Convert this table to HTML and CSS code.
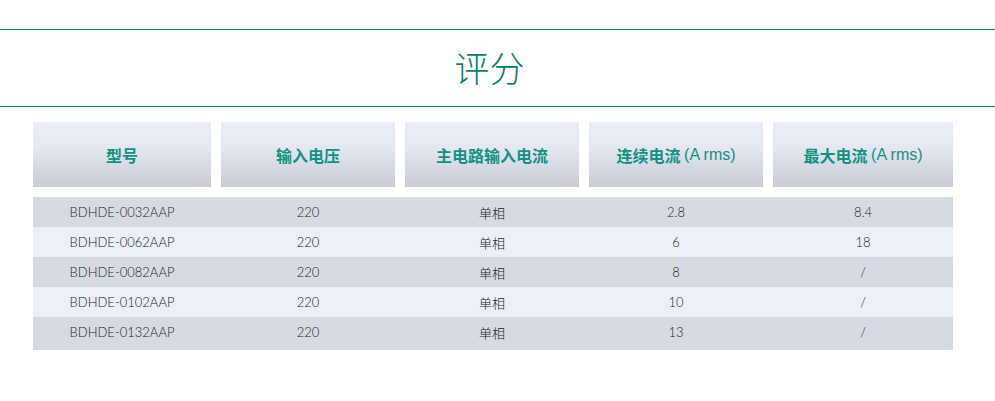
FILE: index.html
```html
<!DOCTYPE html>
<html lang="zh">
<head>
<meta charset="utf-8">
<link rel="stylesheet" href="styles.css">
</head>
<body>
<div class="page">
  <div class="title-band">
    <h1 class="title">评分</h1>
  </div>
  <div class="table">
    <div class="thead">
      <div class="th">型号</div>
      <div class="th">输入电压</div>
      <div class="th">主电路输入电流</div>
      <div class="th">连续电流 <span class="lat">(A rms)</span></div>
      <div class="th">最大电流 <span class="lat">(A rms)</span></div>
    </div>
    <div class="tbody">
      <div class="tr odd"><div class="td">BDHDE-0032AAP</div><div class="td">220</div><div class="td cjk">单相</div><div class="td">2.8</div><div class="td">8.4</div></div>
      <div class="tr even"><div class="td">BDHDE-0062AAP</div><div class="td">220</div><div class="td cjk">单相</div><div class="td">6</div><div class="td">18</div></div>
      <div class="tr odd"><div class="td">BDHDE-0082AAP</div><div class="td">220</div><div class="td cjk">单相</div><div class="td">8</div><div class="td">/</div></div>
      <div class="tr even"><div class="td">BDHDE-0102AAP</div><div class="td">220</div><div class="td cjk">单相</div><div class="td">10</div><div class="td">/</div></div>
      <div class="tr odd last"><div class="td">BDHDE-0132AAP</div><div class="td">220</div><div class="td cjk">单相</div><div class="td">13</div><div class="td">/</div></div>
    </div>
  </div>
</div>
</body>
</html>
```
FILE: styles.css
```css
* { box-sizing: border-box; }
html, body { margin: 0; padding: 0; background: #fff; }
body { font-family: "Lato", "Noto Sans CJK SC", sans-serif; }
.page { padding-top: 29px; }
.title-band {
  border-top: 1px solid #0d7f6d;
  border-bottom: 1px solid #0d7f6d;
  height: 78px;
  display: flex;
  align-items: center;
  justify-content: center;
  padding-right: 16px;
}
.title {
  margin: 0;
  font-family: "Noto Sans CJK SC", sans-serif;
  font-weight: 300;
  font-size: 35px;
  color: #0b7d6c;
  line-height: 1;
  padding-bottom: 4px;
}
.table { width: 920px; margin: 15px 0 0 33px; }
.thead, .tr {
  display: grid;
  grid-template-columns: 178px 174px 174px 174px 180px;
  column-gap: 10px;
}
.th {
  height: 65px;
  display: flex;
  align-items: center;
  justify-content: center;
  background: linear-gradient(to bottom, #ebeff8 0%, #e3e7f0 40%, #c8cbd3 100%);
  color: #14917f;
  font-family: "Noto Sans CJK SC", sans-serif;
  font-weight: 700;
  font-size: 16px;
  white-space: pre;
  padding-top: 1px;
}
.th .lat { font-family: "Liberation Sans", sans-serif; font-weight: 400; font-size: 16px; }
.tbody { margin-top: 10px; }
.tr { height: 30px; align-items: center; }
.tr.last { height: 33px; padding-bottom: 3px; }
.odd { background: #d6dae2; }
.even { background: #eaeff8; }
.td {
  text-align: center;
  font-size: 13px;
  color: #262626;
  font-weight: 300;
}
.td.cjk { font-family: "Noto Sans CJK SC", sans-serif; font-size: 13px; font-weight: 300; }
```
